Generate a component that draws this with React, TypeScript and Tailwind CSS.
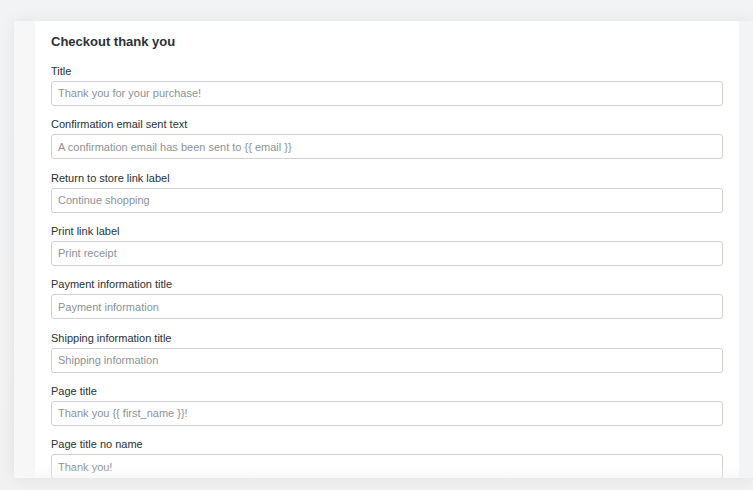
import React from "react";

const fields = [
  ["Title", "Thank you for your purchase!"],
  ["Confirmation email sent text", "A confirmation email has been sent to {{ email }}"],
  ["Return to store link label", "Continue shopping"],
  ["Print link label", "Print receipt"],
  ["Payment information title", "Payment information"],
  ["Shipping information title", "Shipping information"],
  ["Page title", "Thank you {{ first_name }}!"],
  ["Page title no name", "Thank you!"],
];

export default function App() {
  return (
    <div
      className="relative w-[753px] h-[490px] overflow-hidden bg-gradient-to-b from-[#f2f3f4] to-[#f1f1f2] pt-[21px] pl-[14px]"
      style={{ fontFamily: '"Helvetica Neue", "Liberation Sans", Arial, sans-serif' }}
    >
      <div className="flex h-[457px] shadow-[0_0_14px_rgba(0,0,0,0.07)]">
        <div className="w-[21px] shrink-0 bg-[#f7f7f8]" />
        <div className="relative w-[704px] shrink-0 bg-white px-[16px] pt-[11px] overflow-hidden">
          <h2 className="text-[13px] leading-[20px] font-semibold text-[#2a3038] mb-[12px]">
            Checkout thank you
          </h2>
          {fields.map(([label, value]) => (
            <div key={label} className="mb-[11.33px]">
              <div className="text-[11px] leading-[14px] text-[#2a3038] mb-[3px]">{label}</div>
              <div className="h-[25px] rounded-[3px] border border-[#cdd1d6] bg-white px-[6px] flex items-center text-[11px] text-[#8c9298]">
                {value}
              </div>
            </div>
          ))}
          <div className="pointer-events-none absolute left-0 right-0 bottom-0 h-[12px] bg-gradient-to-b from-transparent to-[rgba(240,241,243,0.45)]" />
        </div>
        <div className="flex-1 bg-[#f3f4f6]" />
      </div>
    </div>
  );
}
